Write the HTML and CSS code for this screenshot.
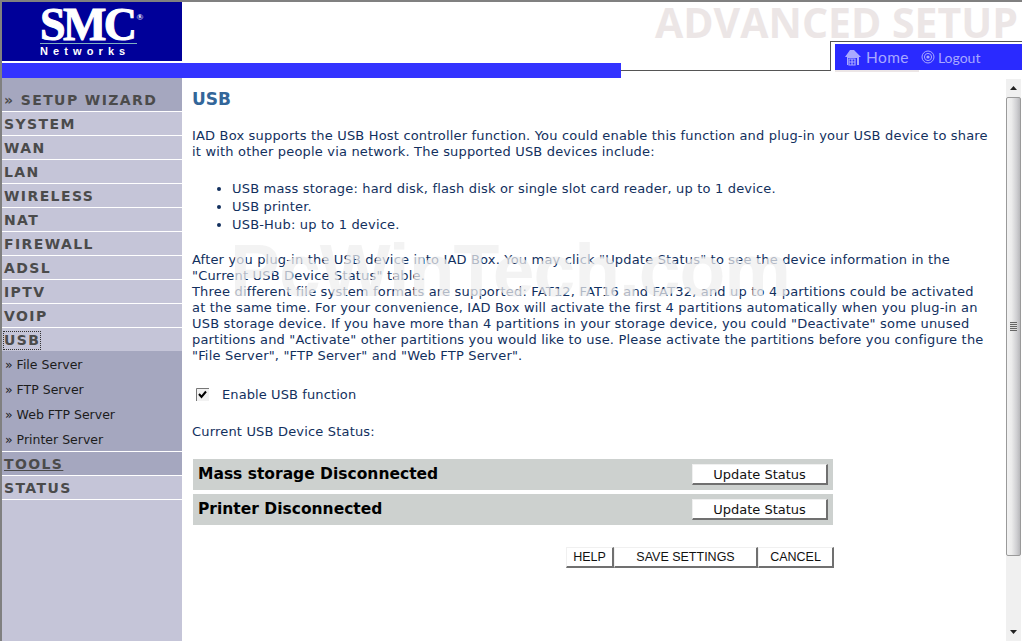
FILE: index.html
```html
<!DOCTYPE html>
<html lang="en">
<head>
    <meta charset="UTF-8">
    <title>USB - Advanced Setup</title>
    <link rel="stylesheet" href="styles.css">
</head>
<body>
<div class="page">
    <div class="header">
        <div class="logo">
            <div class="logo-smc">SMC<span class="logo-reg">®</span></div>
            <div class="logo-net">Networks</div>
        </div>
        <div class="page-title">ADVANCED SETUP</div>
        <div class="blue-bar"></div>
        <div class="connector"></div>
        <div class="tab-frame">
            <div class="tab">
                <a class="tab-link tab-home">
                    <svg width="17" height="17" viewBox="0 0 17 17"><path d="M0 8 L5 1 H9 L16 8 H14 V16 H12 V9 H3 V16 H2 V8 Z" fill="#a9a9ff"/><path d="M4 10 H10 V16 H4 Z M7 10 V16 M4 13 H10" fill="none" stroke="#a9a9ff" stroke-width="1.2"/></svg>
                    Home
                </a>
                <a class="tab-link tab-logout">
                    <svg width="14" height="14" viewBox="0 0 14 14"><circle cx="7" cy="7" r="6" fill="none" stroke="#a9a9ff"/><circle cx="7" cy="7" r="3.6" fill="none" stroke="#a9a9ff"/><circle cx="7" cy="7" r="1.6" fill="#a9a9ff"/></svg>
                    Logout
                </a>
            </div>
            <div class="tab-strip"></div>
        </div>
    </div>

    <div class="body-row">
        <div class="nav">
            <div class="nav-wizard">» SETUP WIZARD</div>
            <div class="nav-item">SYSTEM</div>
            <div class="nav-item">WAN</div>
            <div class="nav-item">LAN</div>
            <div class="nav-item">WIRELESS</div>
            <div class="nav-item">NAT</div>
            <div class="nav-item">FIREWALL</div>
            <div class="nav-item">ADSL</div>
            <div class="nav-item">IPTV</div>
            <div class="nav-item">VOIP</div>
            <div class="nav-item"><span class="nav-focus">USB</span></div>
            <div class="nav-sub">» File Server</div>
            <div class="nav-sub">» FTP Server</div>
            <div class="nav-sub">» Web FTP Server</div>
            <div class="nav-sub">» Printer Server</div>
            <div class="nav-item nav-hover">TOOLS</div>
            <div class="nav-item">STATUS</div>
            <div class="nav-rest"></div>
        </div>

        <div class="content">
            <h1>USB</h1>
            <p class="intro">IAD Box supports the USB Host controller function. You could enable this function and plug-in your USB device to share it with other people via network. The supported USB devices include:</p>
            <ul>
                <li>USB mass storage: hard disk, flash disk or single slot card reader, up to 1 device.</li>
                <li>USB printer.</li>
                <li>USB-Hub: up to 1 device.</li>
            </ul>
            <p class="after">After you plug-in the USB device into IAD Box. You may click "Update Status" to see the device information in the "Current USB Device Status" table.<br>
            Three different file system formats are supported: FAT12, FAT16 and FAT32, and up to 4 partitions could be activated at the same time. For your convenience, IAD Box will activate the first 4 partitions automatically when you plug-in an USB storage device. If you have more than 4 partitions in your storage device, you could "Deactivate" some unused partitions and "Activate" other partitions you would like to use. Please activate the partitions before you configure the "File Server", "FTP Server" and "Web FTP Server".</p>
            <div class="enable">
                <svg class="check" width="13" height="13" viewBox="0 0 13 13"><rect width="13" height="13" fill="#f2f2f2"/><path d="M0.5 13 V0.5 H13" fill="none" stroke="#777"/><path d="M3 6 L5.5 9 L10 3.5" fill="none" stroke="#000" stroke-width="2"/></svg>
                Enable USB function
            </div>
            <p class="status-label">Current USB Device Status:</p>
            <div class="status-row">
                <span class="status-name">Mass storage Disconnected</span>
                <button class="btn btn-update">Update Status</button>
            </div>
            <div class="status-row">
                <span class="status-name">Printer Disconnected</span>
                <button class="btn btn-update">Update Status</button>
            </div>
            <div class="actions">
                <button class="btn btn-action btn-help">HELP</button>
                <button class="btn btn-action btn-save">SAVE SETTINGS</button>
                <button class="btn btn-action btn-cancel">CANCEL</button>
            </div>
            <div class="watermark">PcWinTech.com</div>
        </div>

        <div class="scrollbar">
            <div class="sb-up"><svg width="7" height="4" viewBox="0 0 7 4"><path d="M3.5 0 L7 4 H0 Z" fill="#222"/></svg></div>
            <div class="sb-thumb"><div class="sb-grip"></div></div>
            <div class="sb-track"><svg width="7" height="4" viewBox="0 0 7 4"><path d="M0 0 H7 L3.5 4 Z" fill="#222"/></svg></div>
        </div>
    </div>
</div>
</body>
</html>
```

FILE: styles.css
```css
html, body {
    margin: 0;
    padding: 0;
    background: white;
}
body {
    font-family: "DejaVu Sans", Verdana, sans-serif;
    font-size: 13px;
    color: #12305e;
}
.page {
    width: 1022px;
    height: 641px;
    overflow: hidden;
    box-sizing: border-box;
    border-top: 2px solid #808080;
    border-left: 2px solid #808080;
    display: flex;
    flex-direction: column;
}

/* header */
.header {
    display: grid;
    grid-template-columns: 180px 439px 209px 192px;
    grid-template-rows: 39px 22px 15px;
    flex: none;
}
.logo {
    grid-column: 1;
    grid-row: 1 / 3;
    height: 59px;
    box-sizing: border-box;
    padding-left: 38px;
    background: #000099;
    color: white;
    display: flex;
    flex-direction: column;
    align-items: flex-start;
}
.logo-smc {
    font-family: "Liberation Serif", serif;
    font-weight: bold;
    font-size: 46px;
    line-height: 32px;
    height: 34px;
    margin-top: 7px;
    width: 97px;
    letter-spacing: -2.6px;
    -webkit-text-stroke: 1px white;
    border-bottom: 1px solid #7fb0c0;
    white-space: nowrap;
}
.logo-reg {
    font-size: 9px;
    letter-spacing: 0;
    vertical-align: 20px;
    -webkit-text-stroke: 0;
    margin-left: 2px;
    line-height: 0;
}
.logo-net {
    font-family: "Liberation Sans", sans-serif;
    font-weight: bold;
    font-size: 11px;
    letter-spacing: 5.1px;
    line-height: 12px;
    margin-top: 1px;
    width: 97px;
    white-space: nowrap;
}
.page-title {
    grid-column: 2 / 5;
    grid-row: 1;
    text-align: right;
    padding-right: 4px;
    font-family: "Open Sans", sans-serif;
    font-weight: 700;
    font-size: 41px;
    line-height: 40px;
    color: #ece6e6;
    white-space: nowrap;
}
.blue-bar {
    grid-column: 1 / 3;
    grid-row: 3;
    background: #3333ff;
}
.connector {
    grid-column: 3;
    grid-row: 2 / 4;
    height: 29px;
    border-bottom: 1px solid #555;
}
.tab-frame {
    grid-column: 4;
    grid-row: 2 / 4;
    align-self: start;
    height: 30px;
    border-top: 1px solid #555;
    border-left: 1px solid #555;
    box-sizing: border-box;
    padding: 2px 0 0 4px;
}
.tab {
    height: 26px;
    background: #2a2aff;
    display: flex;
    align-items: center;
    gap: 12px;
    padding-left: 10px;
    color: #a8a8ff;
    font-family: "Lato", sans-serif;
    white-space: nowrap;
}
.tab-link {
    display: flex;
    align-items: center;
}
.tab-home {
    font-size: 15.5px;
    letter-spacing: 0.4px;
    gap: 4px;
}
.tab-logout {
    font-size: 14px;
    gap: 3px;
}
.tab-strip {
    width: 84px;
    height: 2px;
    background: #ece6e6;
}

/* left menu */
.body-row {
    flex: 1;
    display: flex;
    min-height: 0;
}
.nav {
    width: 180px;
    flex: none;
    display: flex;
    flex-direction: column;
    font-weight: bold;
    font-size: 14px;
    letter-spacing: 1.4px;
    color: #4b4b4b;
    background: #c5c5d8;
}
.nav-wizard {
    height: 33px;
    box-sizing: border-box;
    background: #a5a7bf;
    padding: 14px 0 0 2px;
    line-height: 16px;
    white-space: nowrap;
}
.nav-item {
    height: 24px;
    box-sizing: border-box;
    border-top: 1px solid white;
    padding-left: 2px;
    line-height: 25px;
    background: #c5c5d8;
}
.nav-focus {
    outline: 1px dotted #333;
    display: inline-block;
    line-height: 17px;
}
.nav-sub {
    height: 25px;
    background: #a5a7bf;
    font-weight: normal;
    font-size: 12.5px;
    letter-spacing: 0;
    line-height: 27px;
    padding-left: 3px;
    color: #1c1c1c;
}
.nav-hover {
    background: #a5a7bf;
    text-decoration: underline;
}
.nav-rest {
    flex: 1;
    border-top: 1px solid white;
}

/* main area */
.content {
    position: relative;
    flex: 1;
    box-sizing: border-box;
    padding: 0 17px 0 10px;
}
.content h1 {
    margin: 10px 0 0 0;
    font-size: 17px;
    line-height: 22px;
    color: #336699;
}
.content p {
    margin: 0;
    line-height: 16px;
    letter-spacing: 0.18px;
}
.intro {
    padding-top: 18px;
}
.content ul {
    margin: 20px 0 0 0;
    padding: 0 0 0 40px;
    line-height: 18px;
    letter-spacing: 0.18px;
}
.content p.after {
    margin-top: 18px;
}
.enable {
    margin: 23px 0 0 4px;
    line-height: 16px;
    display: flex;
    align-items: center;
    gap: 13px;
    letter-spacing: 0.1px;
}
.check {
    flex: none;
    margin-top: -2px;
}
.content p.status-label {
    margin-top: 21px;
}
.status-row {
    width: 640px;
    height: 31px;
    margin: 0 0 4px 1px;
    background: #cdd1cf;
    display: flex;
    align-items: center;
    justify-content: space-between;
    box-sizing: border-box;
    padding: 0 5px;
    font-size: 15.5px;
    font-weight: bold;
    color: black;
}
.status-name {
    margin-top: -2px;
}
.status-label + .status-row {
    margin-top: 19px;
}
.btn {
    font-family: "DejaVu Sans", Verdana, sans-serif;
    font-size: 13px;
    color: #111;
    background: white;
    border: 1px solid;
    border-color: #f0f0f0 #707070 #707070 #f0f0f0;
    border-right-width: 2px;
    border-bottom-width: 2px;
    padding: 0;
    box-sizing: border-box;
}
.btn-update {
    width: 136px;
    height: 21px;
    line-height: 17px;
}
.actions {
    display: flex;
    margin: 22px 0 0 374px;
}
.btn-action {
    height: 21px;
    font-family: "Liberation Sans", Arial, sans-serif;
    font-size: 12.5px;
    line-height: 17px;
}
.btn-help { width: 48px; }
.btn-save { width: 144px; }
.btn-cancel { width: 76px; }
.watermark {
    position: absolute;
    left: 48px;
    top: 154px;
    font-family: "Liberation Sans", sans-serif;
    font-weight: bold;
    font-size: 75px;
    line-height: 76px;
    letter-spacing: -1px;
    color: rgba(238, 238, 238, 0.72);
    white-space: nowrap;
    pointer-events: none;
}

/* scrollbar */
.scrollbar {
    width: 15px;
    flex: none;
    margin: 1px 1px 0 0;
    display: flex;
    flex-direction: column;
    background: #f0f0f0;
}
.sb-up {
    height: 18px;
    display: flex;
    align-items: center;
    justify-content: center;
    flex: none;
}
.sb-thumb {
    height: 459px;
    flex: none;
    box-sizing: border-box;
    border: 1px solid #9a9a9a;
    border-radius: 2px;
    background: linear-gradient(to right, #f2f2f2 0%, #ececec 35%, #cfcfd2 75%, #b8b8bb 100%);
    display: flex;
    align-items: center;
    justify-content: center;
}
.sb-grip {
    width: 7px;
    height: 9px;
    background: repeating-linear-gradient(to bottom, #666 0, #666 1px, #ddd 1px, #ddd 2px);
}
.sb-track {
    flex: 1;
    display: flex;
    align-items: flex-end;
    justify-content: center;
    padding-bottom: 7px;
}
```
